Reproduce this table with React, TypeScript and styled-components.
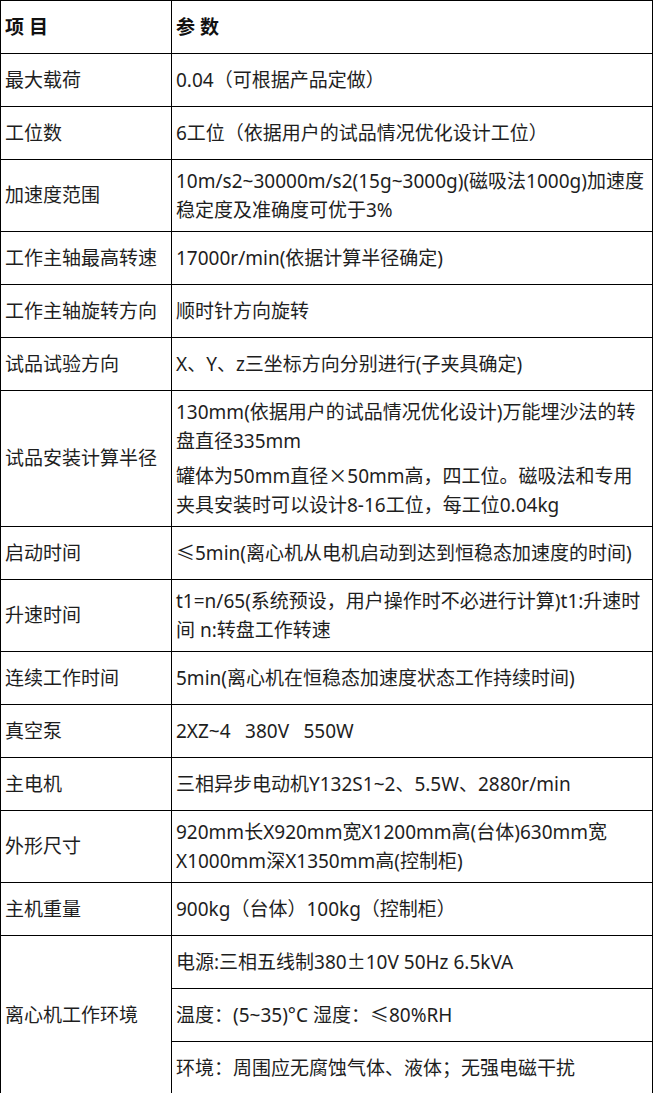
import React from 'react';
import styled, { createGlobalStyle } from 'styled-components';

const GlobalStyle = createGlobalStyle`
  *, *::before, *::after {
    box-sizing: border-box;
  }
  body {
    margin: 0;
    background: #fff;
    font-family: "Noto Sans", "Noto Sans CJK SC", sans-serif;
  }
`;

const Sheet = styled.div`
  display: grid;
  grid-template-columns: 171px 481px;
  width: 653px;
  border-left: 1px solid #000;
  border-top: 1px solid #000;
  color: #1e1e1e;
  font-size: 19px;
  line-height: 28.5px;
`;

const Cell = styled.div<{ $span?: number }>`
  display: flex;
  flex-direction: column;
  justify-content: center;
  min-height: 53px;
  padding: 7px 2px 7px 4px;
  border-right: 1px solid #000;
  border-bottom: 1px solid #000;
  grid-row: ${(p) => (p.$span ? `span ${p.$span}` : 'auto')};
`;

const HeadCell = styled(Cell)`
  font-weight: 700;
  color: #111;
`;

const Para = styled.p`
  margin: 0;
  & + & {
    margin-top: 6px;
  }
`;

// full-width symbols come from the CJK face, as in the original sheet
const Wide = styled.span`
  font-family: "Noto Sans CJK SC", sans-serif;
`;

const withWide = (text: string) =>
  text.split(/([×±])/).map((part, i) =>
    part === '×' || part === '±' ? <Wide key={i}>{part}</Wide> : part
  );

type Row = { label: string; value: string[] };

const rows: Row[] = [
  { label: '最大载荷', value: ['0.04（可根据产品定做）'] },
  { label: '工位数', value: ['6工位（依据用户的试品情况优化设计工位）'] },
  { label: '加速度范围', value: ['10m/s2~30000m/s2(15g~3000g)(磁吸法1000g)加速度稳定度及准确度可优于3%'] },
  { label: '工作主轴最高转速', value: ['17000r/min(依据计算半径确定)'] },
  { label: '工作主轴旋转方向', value: ['顺时针方向旋转'] },
  { label: '试品试验方向', value: ['X、Y、z三坐标方向分别进行(子夹具确定)'] },
  {
    label: '试品安装计算半径',
    value: [
      '130mm(依据用户的试品情况优化设计)万能埋沙法的转盘直径335mm',
      '罐体为50mm直径×50mm高，四工位。磁吸法和专用夹具安装时可以设计8-16工位，每工位0.04kg',
    ],
  },
  { label: '启动时间', value: ['≤5min(离心机从电机启动到达到恒稳态加速度的时间)'] },
  { label: '升速时间', value: ['t1=n/65(系统预设，用户操作时不必进行计算)t1:升速时间 n:转盘工作转速'] },
  { label: '连续工作时间', value: ['5min(离心机在恒稳态加速度状态工作持续时间)'] },
  { label: '真空泵', value: ['2XZ~4\u00a0\u2002380V\u00a0\u2002550W'] },
  { label: '主电机', value: ['三相异步电动机Y132S1~2、5.5W、2880r/min'] },
  { label: '外形尺寸', value: ['920mm长X920mm宽X1200mm高(台体)630mm宽X1000mm深X1350mm高(控制柜)'] },
  { label: '主机重量', value: ['900kg（台体）100kg（控制柜）'] },
];

const environment = [
  '电源:三相五线制380±10V 50Hz 6.5kVA',
  '温度：(5~35)°C 湿度：≤80%RH',
  '环境：周围应无腐蚀气体、液体；无强电磁干扰',
];

export default function App() {
  return (
    <>
      <GlobalStyle />
      <Sheet>
        <HeadCell>项 目</HeadCell>
        <HeadCell>参 数</HeadCell>
        {rows.map((row) => (
          <React.Fragment key={row.label}>
            <Cell>{row.label}</Cell>
            <Cell>
              {row.value.map((v) => (
                <Para key={v}>{withWide(v)}</Para>
              ))}
            </Cell>
          </React.Fragment>
        ))}
        <Cell $span={3}>离心机工作环境</Cell>
        {environment.map((v) => (
          <Cell key={v}>
            <Para>{withWide(v)}</Para>
          </Cell>
        ))}
      </Sheet>
    </>
  );
}
